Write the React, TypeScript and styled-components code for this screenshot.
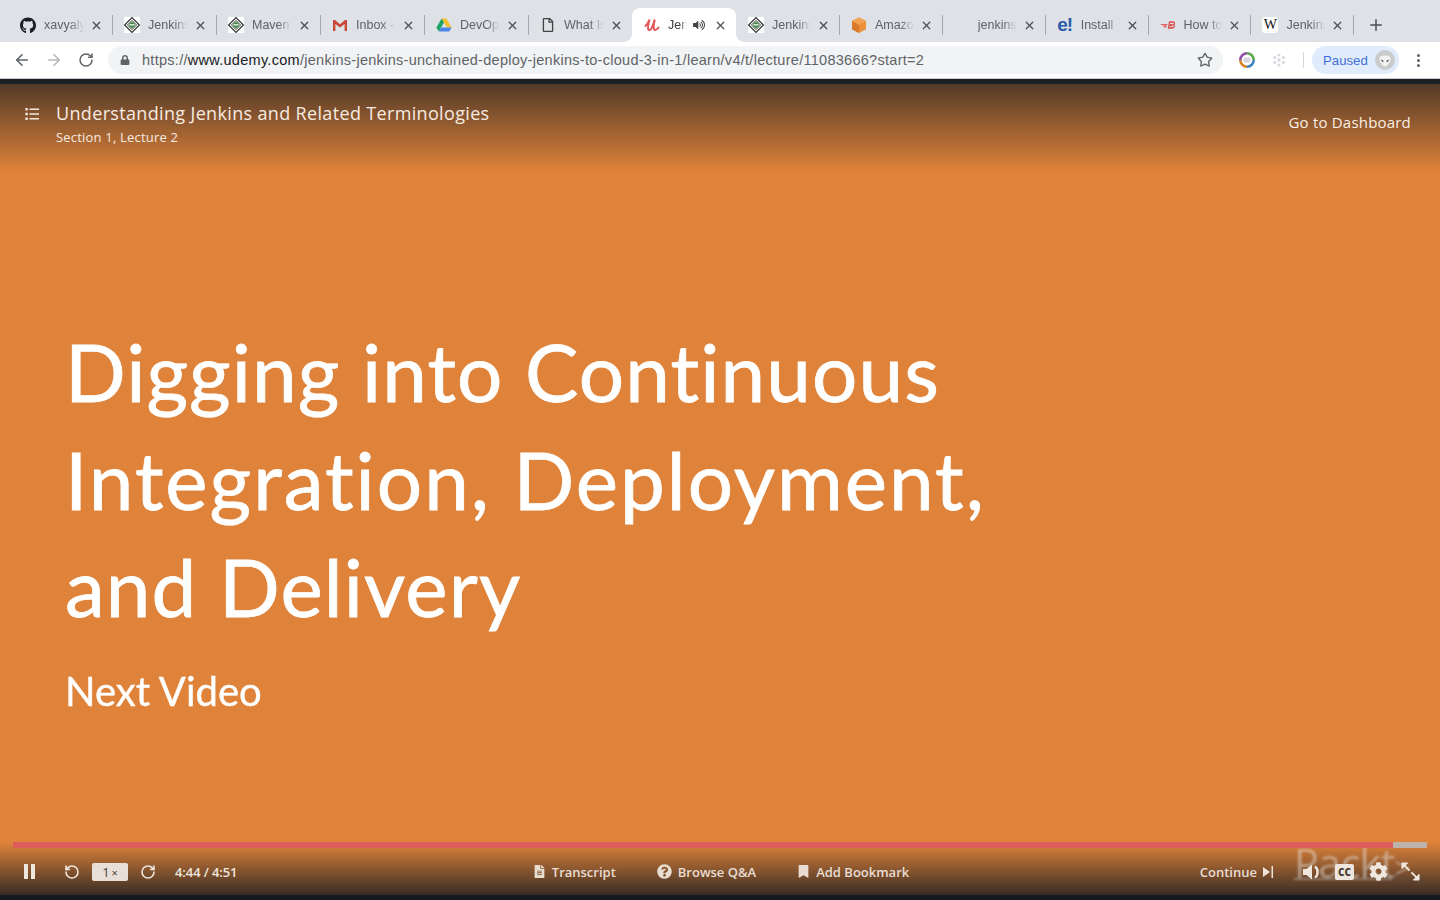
import React from "react";
import styled, { createGlobalStyle } from "styled-components";
import { ArrowLeft, ArrowRight, RotateCw, RotateCcw, Star, X, Plus } from "lucide-react";
import {
  FaGithub,
  FaLock,
  FaFileAlt,
  FaQuestionCircle,
  FaBookmark,
  FaCog,
  FaVolumeUp,
  FaRegFile,
} from "react-icons/fa";

const JenkinsIcon = () => (
  <svg width="16" height="16" viewBox="0 0 16 16">
    <rect width="16" height="16" fill="#fff" />
    <path d="M8 .6 15.4 8 8 15.4.6 8Z" fill="#fff" stroke="#333" strokeWidth="1.2" />
    <path d="M8 3.2 12.8 8 8 12.8 3.2 8Z" fill="#a9b8a5" stroke="#555" strokeWidth=".7" />
    <circle cx="8" cy="8" r="2.7" fill="#3f8a4c" />
    <rect x="5.6" y="7" width="4.8" height="1.6" fill="#d7e5d4" />
  </svg>
);

const GmailIcon = () => (
  <svg width="16" height="16" viewBox="0 0 16 16">
    <path d="M1 3h2l5 4.2L13 3h2v11h-2.4V7L8 10.6 3.4 7v7H1Z" fill="#c9473a" />
  </svg>
);

const DriveIcon = () => (
  <svg width="16" height="16" viewBox="0 0 16 16">
    <path d="M5.6 1.5h4.8l5.2 9h-4.8Z" fill="#f5c02f" />
    <path d="M5.6 1.5 .4 10.5l2.4 4 5.2-9Z" fill="#1fa463" />
    <path d="M2.8 14.5h10.4l2.4-4H5.2Z" fill="#4a86e8" />
  </svg>
);

const UdemyIcon = () => (
  <svg width="16" height="16" viewBox="0 0 16 16" fill="none" stroke="#e2595a" strokeWidth="2" strokeLinecap="round">
    <path d="M1.5 9C3 7.5 4.5 5 5.5 2.5 4.5 6 3.5 11 4.5 12.8 6 14.5 9 10 10.5 3.5" />
    <path d="M10.5 3.5C9.5 8 9 13 11 13c1.2 0 2.5-1 3.5-2.5" />
  </svg>
);

const AmazonIcon = () => (
  <svg width="16" height="16" viewBox="0 0 16 16">
    <path d="M8 .4 15 4v8.2L8 16 1 12.2V4Z" fill="#ec8f3a" />
    <path d="M8 7.8V16L1 12.2V4Z" fill="#d97a2b" />
    <path d="M8 .4 15 4 8 7.8 1 4Z" fill="#f3a452" />
  </svg>
);

const BrandIcon = () => (
  <svg width="16" height="16" viewBox="0 0 16 16">
    <path d="M0 7h7.5L7 8.5H3Zm3 2h3.5L6 10.5H4.5Z" fill="#e2595a" />
    <path d="M9.5 5H13c1.8 0 2 2.4.5 3 1.5.5 1 3-1 3H8.5Zm.6 2.6h2.4M9.7 8.7h2.5" fill="none" stroke="#d94b4b" strokeWidth="1.3" />
  </svg>
);

const ListIcon = () => (
  <svg width="14" height="14" viewBox="0 0 14 14" fill="none" stroke="#f5e8dc" strokeWidth="1.6">
    <path d="M4.5 2.2H14M4.5 7H14M4.5 11.8H14" />
    <path d="M.4 2.2h2.4M.4 7h2.4M.4 11.8h2.4" strokeWidth="2.6" />
  </svg>
);

const VolumeIcon = () => (
  <svg width="19" height="18" viewBox="0 0 19 18" fill="#efe6dd">
    <path d="M0 6h3.5L9 1.5v15L3.5 12H0Z" />
    <path d="M12 3.5c3.5 2.5 3.5 8.5 0 11" fill="none" stroke="#efe6dd" strokeWidth="2.4" />
  </svg>
);

const ExpandIcon = () => (
  <svg width="19" height="19" viewBox="0 0 20 20" fill="none" stroke="#f0e6dc" strokeWidth="2">
    <path d="M3 3 9 9M11 11l6 6" />
    <path d="M1 7V1h6Z" fill="#f0e6dc" strokeWidth="1" />
    <path d="M19 13v6h-6Z" fill="#f0e6dc" strokeWidth="1" />
  </svg>
);

const NextIcon = () => (
  <svg width="10" height="12" viewBox="0 0 10 12" fill="#eee3d9">
    <path d="M0 1v10l7-5Z" />
    <rect x="8.5" y="0" width="1.5" height="12" />
  </svg>
);

function EIcon() {
  return <EMark>e!</EMark>;
}

function WikiIcon() {
  return <WikiMark>W</WikiMark>;
}

const tabs = [
  { title: "xavyaly", icon: <FaGithub size={17} color="#1b1f23" /> },
  { title: "Jenkins", icon: <JenkinsIcon /> },
  { title: "Maven", icon: <JenkinsIcon /> },
  { title: "Inbox -", icon: <GmailIcon /> },
  { title: "DevOps", icon: <DriveIcon /> },
  { title: "What Is", icon: <FaRegFile size={14} color="#444" /> },
  { title: "Jenkins", icon: <UdemyIcon />, active: true },
  { title: "Jenkins", icon: <JenkinsIcon /> },
  { title: "Amazon", icon: <AmazonIcon /> },
  { title: "jenkins", icon: null },
  { title: "Install", icon: <EIcon /> },
  { title: "How to", icon: <BrandIcon /> },
  { title: "Jenkins", icon: <WikiIcon /> },
];

const elapsed = 284;
const total = 291;

export default function App() {
  return (
    <Page>
      <GlobalStyle />
      <TabStrip>
        {tabs.map((tab, index) => (
          <Tab key={index} $active={tab.active}>
            <TabIcon>{tab.icon}</TabIcon>
            <TabTitle $active={tab.active}>{tab.title}</TabTitle>
            {tab.active && (
              <SpeakerMark>
                <FaVolumeUp size={12} color="#444" />
              </SpeakerMark>
            )}
            <CloseButton>
              <X size={13} strokeWidth={2.2} />
            </CloseButton>
          </Tab>
        ))}
        <NewTab>
          <Plus size={18} strokeWidth={2} />
        </NewTab>
      </TabStrip>

      <Toolbar>
        <NavButton>
          <ArrowLeft size={18} strokeWidth={2.2} />
        </NavButton>
        <NavButton $disabled>
          <ArrowRight size={18} strokeWidth={2.2} />
        </NavButton>
        <NavButton>
          <RotateCw size={16} strokeWidth={2.2} />
        </NavButton>
        <Omnibox>
          <FaLock size={10} color="#5f6368" />
          <Url>
            https://<strong>www.udemy.com</strong>
            /jenkins-jenkins-unchained-deploy-jenkins-to-cloud-3-in-1/learn/v4/t/lecture/11083666?start=2
          </Url>
          <Star size={16} strokeWidth={2} color="#5f6368" />
        </Omnibox>
        <Extension>
          <svg width="16" height="16" viewBox="0 0 16 16" fill="none" strokeWidth="2.6">
            <path d="M8 1.3A6.7 6.7 0 0 1 14.7 8" stroke="#5ea84f" />
            <path d="M14.7 8A6.7 6.7 0 0 1 8 14.7" stroke="#3f83c6" />
            <path d="M8 14.7A6.7 6.7 0 0 1 1.3 8" stroke="#d9822b" />
            <path d="M1.3 8A6.7 6.7 0 0 1 8 1.3" stroke="#8f4fa8" />
            <rect x="4.6" y="5.6" width="6.8" height="4.8" rx="1" fill="#d9d4de" stroke="none" />
          </svg>
        </Extension>
        <Extension>
          <svg width="14" height="14" viewBox="0 0 14 14" fill="#d5d8dc">
            <circle cx="7" cy="7" r="1.8" />
            <circle cx="7" cy="2" r="1.5" />
            <circle cx="7" cy="12" r="1.5" />
            <circle cx="2.6" cy="4.5" r="1.5" />
            <circle cx="11.4" cy="4.5" r="1.5" />
            <circle cx="2.6" cy="9.5" r="1.5" />
            <circle cx="11.4" cy="9.5" r="1.5" />
          </svg>
        </Extension>
        <ToolbarDivider />
        <ProfileChip>
          Paused
          <Avatar>
            <svg width="20" height="20" viewBox="0 0 20 20">
              <circle cx="10" cy="10" r="10" fill="#c9cbcd" />
              <path d="M4.5 8.5c0-2 2.5-3 5.5-3s5.5 1 5.5 3c0 3.5-3.5 8-5.5 8s-5.5-4.5-5.5-8Z" fill="#f4f4f4" />
              <path d="M5.8 9.5 9 11 7.5 12ZM14.2 9.5 11 11 12.5 12Z" fill="#333" />
            </svg>
          </Avatar>
        </ProfileChip>
        <MenuDots>
          <i />
          <i />
          <i />
        </MenuDots>
      </Toolbar>
      <BlackBand />

      <Player>
        <PlayerHeader>
          <HeaderLeft>
            <ListIcon />
            <HeaderTitles>
              <LectureTitle>Understanding Jenkins and Related Terminologies</LectureTitle>
              <LectureMeta>Section 1, Lecture 2</LectureMeta>
            </HeaderTitles>
          </HeaderLeft>
          <DashboardLink>Go to Dashboard</DashboardLink>
        </PlayerHeader>

        <Slide>
          <SlideHeading>
            <SlideLine $tracking={1.1}>Digging into Continuous</SlideLine>
            <SlideLine $tracking={2}>Integration, Deployment,</SlideLine>
            <SlideLine $tracking={1.1}>and Delivery</SlideLine>
          </SlideHeading>
          <SlideSub>Next Video</SlideSub>
        </Slide>

        <ControlArea>
          <Watermark>
            Packt<WatermarkArrow>&gt;</WatermarkArrow>
            <WatermarkSmall>Udemy</WatermarkSmall>
          </Watermark>
          <ProgressTrack>
            <ProgressFill style={{ width: `${(elapsed / total) * 100}%` }} />
          </ProgressTrack>
          <ControlRow>
            <ControlGroup>
              <PauseIcon>
                <i />
                <i />
              </PauseIcon>
              <RotateCcw size={16} strokeWidth={2.4} />
              <SpeedBox>
                1<small>×</small>
              </SpeedBox>
              <RotateCw size={16} strokeWidth={2.4} />
              <TimeLabel>4:44 / 4:51</TimeLabel>
            </ControlGroup>
            <CenterGroup>
              <ActionLink>
                <FaFileAlt size={13} />
                Transcript
              </ActionLink>
              <ActionLink>
                <FaQuestionCircle size={15} />
                Browse Q&amp;A
              </ActionLink>
              <ActionLink>
                <FaBookmark size={13} />
                Add Bookmark
              </ActionLink>
            </CenterGroup>
            <RightGroup>
              <ActionLink>
                Continue
                <NextIcon />
              </ActionLink>
              <RightIcons>
                <VolumeIcon />
                <CcBadge>CC</CcBadge>
                <FaCog size={19} />
                <ExpandIcon />
              </RightIcons>
            </RightGroup>
          </ControlRow>
        </ControlArea>
      </Player>
      <BottomBand />
    </Page>
  );
}

const GlobalStyle = createGlobalStyle`
  html, body {
    margin: 0;
    padding: 0;
    overflow: hidden;
    background: #1a1e25;
  }
`;

const Page = styled.div`
  width: 1440px;
  height: 900px;
  display: flex;
  flex-direction: column;
  font-family: "Liberation Sans", Arial, sans-serif;
`;

const TabStrip = styled.div`
  height: 42px;
  box-sizing: border-box;
  padding: 8px 0 0 8px;
  background: #dee1e6;
  display: flex;
`;

const Tab = styled.div<{ $active?: boolean }>`
  width: 104px;
  height: 34px;
  box-sizing: border-box;
  padding: 0 8px 0 12px;
  display: flex;
  align-items: center;
  background: ${(p) => (p.$active ? "#fff" : "transparent")};
  border-radius: 8px 8px 0 0;
  position: relative;

  &:nth-child(n + 8) {
    width: 102.9px;
  }

  &:not(:nth-child(6)):not(:nth-child(7))::after {
    content: "";
    position: absolute;
    right: -1px;
    top: 7px;
    width: 1px;
    height: 20px;
    background: #a4a7ab;
  }

  ${(p) =>
    p.$active &&
    `
    &::before,
    &::after {
      content: "";
      position: absolute;
      bottom: 0;
      width: 8px;
      height: 8px;
    }
    &::before {
      left: -8px;
      background: radial-gradient(circle at 0 0, transparent 7.5px, #fff 8px);
    }
    &::after {
      right: -8px;
      background: radial-gradient(circle at 100% 0, transparent 7.5px, #fff 8px);
    }
  `}
`;

const TabIcon = styled.span`
  width: 16px;
  height: 16px;
  flex: none;
  margin-right: 8px;
  display: flex;
  align-items: center;
  justify-content: center;
`;

const TabTitle = styled.span<{ $active?: boolean }>`
  flex: 1;
  min-width: 0;
  overflow: hidden;
  white-space: nowrap;
  font-size: 12.5px;
  color: ${(p) => (p.$active ? "#3c4043" : "#5f6368")};
  -webkit-mask-image: linear-gradient(90deg, #000 65%, transparent 100%);
  mask-image: linear-gradient(90deg, #000 65%, transparent 100%);
`;

const SpeakerMark = styled.span`
  flex: none;
  display: flex;
  margin: 0 3px 0 6px;
`;

const CloseButton = styled.span`
  flex: none;
  width: 14px;
  margin-left: 6px;
  display: flex;
  color: #4a4d51;
`;

const EMark = styled.span`
  color: #2a5ca8;
  font: bold 19px "Liberation Sans", sans-serif;
  letter-spacing: -1px;
`;

const WikiMark = styled.span`
  width: 16px;
  height: 16px;
  background: #fff;
  border-radius: 3px;
  color: #111;
  text-align: center;
  font: 14px/16px "Liberation Serif", serif;
`;

const NewTab = styled.span`
  margin: 8px 0 0 14px;
  color: #4a4d51;
  display: flex;
  height: 18px;
`;

const Toolbar = styled.div`
  height: 37px;
  flex: none;
  box-sizing: border-box;
  background: #fff;
  border-bottom: 1px solid #c9cbcf;
  display: flex;
  align-items: center;
  padding: 0 14px 0 6px;
`;

const NavButton = styled.span<{ $disabled?: boolean }>`
  width: 32px;
  display: flex;
  align-items: center;
  justify-content: center;
  color: ${(p) => (p.$disabled ? "#b4b7bb" : "#5f6368")};
`;

const Omnibox = styled.div`
  width: 1115px;
  height: 28px;
  margin: 0 8px 0 6px;
  box-sizing: border-box;
  padding: 0 10px 0 12px;
  border-radius: 14px;
  background: #f1f3f4;
  display: flex;
  align-items: center;
`;

const Url = styled.span`
  flex: 1;
  margin-left: 12px;
  font-size: 14.5px;
  letter-spacing: 0.28px;
  color: #5f6368;
  white-space: nowrap;

  strong {
    font-weight: 400;
    color: #202124;
  }
`;

const Extension = styled.span`
  width: 32px;
  display: flex;
  justify-content: center;
`;

const ToolbarDivider = styled.span`
  width: 1px;
  height: 16px;
  margin: 0 8px;
  background: #d5d7da;
`;

const ProfileChip = styled.div`
  width: 87px;
  height: 28px;
  box-sizing: border-box;
  padding: 0 4px 0 11px;
  border-radius: 14px;
  background: #e0ebfb;
  color: #3f6fd8;
  font-size: 13.2px;
  display: flex;
  align-items: center;
  justify-content: space-between;
`;

const Avatar = styled.span`
  display: flex;
`;

const MenuDots = styled.span`
  margin-left: 18px;
  display: flex;
  flex-direction: column;
  gap: 2px;

  i {
    width: 3px;
    height: 3px;
    border-radius: 50%;
    background: #5f6368;
  }
`;

const BlackBand = styled.div`
  height: 5px;
  flex: none;
  background: #1a1e25;
`;

const BottomBand = styled.div`
  height: 5px;
  flex: none;
  background: #14181f;
`;

const Player = styled.main`
  flex: 1;
  min-height: 0;
  display: flex;
  flex-direction: column;
  background: #e0833a;
  color: #fff;
  font-family: "Open Sans", sans-serif;
`;

const PlayerHeader = styled.header`
  height: 88px;
  flex: none;
  box-sizing: border-box;
  padding: 16px 29px 0 25px;
  display: flex;
  align-items: flex-start;
  justify-content: space-between;
  background: linear-gradient(180deg, #533a28 0%, #e0833a 100%);
`;

const HeaderLeft = styled.div`
  display: flex;
  gap: 17px;

  svg {
    margin-top: 7px;
  }
`;

const HeaderTitles = styled.div`
  display: flex;
  flex-direction: column;
`;

const LectureTitle = styled.h1`
  margin: 0;
  font-size: 18px;
  line-height: 26px;
  font-weight: 500;
  letter-spacing: 0.34px;
  color: #f8ebe0;
`;

const LectureMeta = styled.span`
  margin-top: 2px;
  font-size: 13px;
  line-height: 18px;
  font-weight: 500;
  letter-spacing: 0.2px;
  color: #f8ebe0;
`;

const DashboardLink = styled.a`
  margin-top: 11px;
  font-size: 15px;
  line-height: 22px;
  font-weight: 500;
  letter-spacing: 0.2px;
  color: #fbeee3;
`;

const Slide = styled.section`
  flex: 1;
  min-height: 0;
  padding: 146px 0 0 65px;
  font-family: Lato, sans-serif;
  font-variant-ligatures: none;
  color: #fff;
  filter: blur(0.4px);
`;

const SlideHeading = styled.h2`
  margin: 0;
  font-size: 80px;
  line-height: 107.5px;
  font-weight: 400;
  -webkit-text-stroke: 0.8px #fff;
`;

const SlideLine = styled.span<{ $tracking: number }>`
  display: block;
  letter-spacing: ${(p) => p.$tracking}px;
`;

const SlideSub = styled.p`
  margin: 25px 0 0;
  font-size: 40px;
  line-height: 50px;
  -webkit-text-stroke: 0.4px #fff;
`;

const ControlArea = styled.footer`
  height: 53px;
  flex: none;
  position: relative;
  box-sizing: border-box;
  padding: 0 13px;
  background: linear-gradient(180deg, #e0833a 0%, #382c24 100%);
`;

const Watermark = styled.div`
  position: absolute;
  left: 1294px;
  top: 3px;
  width: 98px;
  height: 33px;
  border-bottom: 2px solid rgba(225, 225, 225, 0.35);
  font: 400 41px/34px "Open Sans", sans-serif;
  letter-spacing: -0.5px;
  white-space: nowrap;
  color: rgba(232, 232, 232, 0.45);
  filter: blur(0.8px);
`;

const WatermarkArrow = styled.span`
  font-size: 28px;
`;

const WatermarkSmall = styled.span`
  position: absolute;
  left: 92px;
  top: 27px;
  font-size: 11px;
  line-height: 12px;
  letter-spacing: 0;
  color: rgba(80, 76, 74, 0.6);
`;

const ProgressTrack = styled.div`
  position: relative;
  height: 6px;
  background: #bdb3aa;
`;

const ProgressFill = styled.div`
  height: 100%;
  background: #de5c5a;
`;

const ControlRow = styled.div`
  position: relative;
  display: grid;
  grid-template-columns: 1fr auto 1fr;
  align-items: center;
  height: 47px;
  margin-right: -13px;
  padding: 0 20px 0 11px;
  color: #efe6dd;
`;

const ControlGroup = styled.div`
  display: flex;
  align-items: center;
  gap: 12px;
`;

const PauseIcon = styled.span`
  display: flex;
  gap: 3px;
  margin-right: 17px;

  i {
    width: 4px;
    height: 15px;
    background: #efe6dd;
  }
`;

const SpeedBox = styled.span`
  width: 36px;
  height: 18px;
  border-radius: 2px;
  background: #e8e0d8;
  color: #4b4038;
  font-size: 13px;
  line-height: 18px;
  text-align: center;
  font-weight: 500;

  small {
    font-size: 11px;
    margin-left: 2px;
  }
`;

const TimeLabel = styled.span`
  margin-left: 7px;
  font-size: 13px;
  font-weight: 600;
  letter-spacing: -0.1px;
`;

const CenterGroup = styled.div`
  display: flex;
  gap: 41px;
  margin-right: 2px;
`;

const ActionLink = styled.span`
  display: flex;
  align-items: center;
  gap: 6px;
  font-size: 13px;
  font-weight: 600;
  color: #e9ddd2;
`;

const RightGroup = styled.div`
  display: flex;
  align-items: center;
  justify-content: flex-end;
`;

const RightIcons = styled.div`
  display: flex;
  align-items: center;
  gap: 13px;
  margin-left: 30px;
`;

const CcBadge = styled.span`
  width: 19px;
  height: 16px;
  margin-right: 2px;
  border-radius: 2px;
  background: #eee6de;
  color: #4a3a30;
  font-size: 10px;
  font-weight: 800;
  line-height: 16px;
  text-align: center;
`;
